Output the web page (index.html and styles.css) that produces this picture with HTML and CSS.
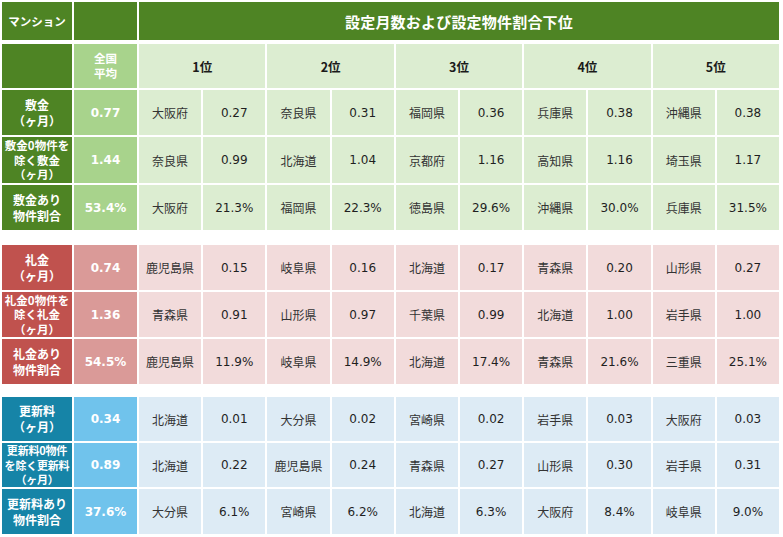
FILE: index.html
```html
<!DOCTYPE html>
<html lang="ja">
<head>
<meta charset="utf-8">
<link rel="stylesheet" href="styles.css">
</head>
<body>
<div class="page">
  <div class="grid head">
    <div class="cell dk-g hlabel">マンション</div>
    <div class="cell dk-g"></div>
    <div class="cell dk-g title">設定月数および設定物件割合下位</div>
    <div class="cell dk-g"></div>
    <div class="cell avg-g avglabel">全国<br>平均</div>
    <div class="cell lt-g rank">1位</div>
    <div class="cell lt-g rank">2位</div>
    <div class="cell lt-g rank">3位</div>
    <div class="cell lt-g rank">4位</div>
    <div class="cell lt-g rank">5位</div>
  </div>

  <div class="grid sec green">
    <div class="cell lab">敷金<br>（ヶ月）</div>
    <div class="cell avg">0.77</div>
    <div class="cell pref">大阪府</div><div class="cell num">0.27</div>
    <div class="cell pref">奈良県</div><div class="cell num">0.31</div>
    <div class="cell pref">福岡県</div><div class="cell num">0.36</div>
    <div class="cell pref">兵庫県</div><div class="cell num">0.38</div>
    <div class="cell pref">沖縄県</div><div class="cell num">0.38</div>

    <div class="cell lab three">敷金0物件を<br>除く敷金<br>（ヶ月）</div>
    <div class="cell avg">1.44</div>
    <div class="cell pref">奈良県</div><div class="cell num">0.99</div>
    <div class="cell pref">北海道</div><div class="cell num">1.04</div>
    <div class="cell pref">京都府</div><div class="cell num">1.16</div>
    <div class="cell pref">高知県</div><div class="cell num">1.16</div>
    <div class="cell pref">埼玉県</div><div class="cell num">1.17</div>

    <div class="cell lab">敷金あり<br>物件割合</div>
    <div class="cell avg">53.4%</div>
    <div class="cell pref">大阪府</div><div class="cell num">21.3%</div>
    <div class="cell pref">福岡県</div><div class="cell num">22.3%</div>
    <div class="cell pref">徳島県</div><div class="cell num">29.6%</div>
    <div class="cell pref">沖縄県</div><div class="cell num">30.0%</div>
    <div class="cell pref">兵庫県</div><div class="cell num">31.5%</div>
  </div>

  <div class="grid sec red">
    <div class="cell lab">礼金<br>（ヶ月）</div>
    <div class="cell avg">0.74</div>
    <div class="cell pref">鹿児島県</div><div class="cell num">0.15</div>
    <div class="cell pref">岐阜県</div><div class="cell num">0.16</div>
    <div class="cell pref">北海道</div><div class="cell num">0.17</div>
    <div class="cell pref">青森県</div><div class="cell num">0.20</div>
    <div class="cell pref">山形県</div><div class="cell num">0.27</div>

    <div class="cell lab three">礼金0物件を<br>除く礼金<br>（ヶ月）</div>
    <div class="cell avg">1.36</div>
    <div class="cell pref">青森県</div><div class="cell num">0.91</div>
    <div class="cell pref">山形県</div><div class="cell num">0.97</div>
    <div class="cell pref">千葉県</div><div class="cell num">0.99</div>
    <div class="cell pref">北海道</div><div class="cell num">1.00</div>
    <div class="cell pref">岩手県</div><div class="cell num">1.00</div>

    <div class="cell lab">礼金あり<br>物件割合</div>
    <div class="cell avg">54.5%</div>
    <div class="cell pref">鹿児島県</div><div class="cell num">11.9%</div>
    <div class="cell pref">岐阜県</div><div class="cell num">14.9%</div>
    <div class="cell pref">北海道</div><div class="cell num">17.4%</div>
    <div class="cell pref">青森県</div><div class="cell num">21.6%</div>
    <div class="cell pref">三重県</div><div class="cell num">25.1%</div>
  </div>

  <div class="grid sec blue">
    <div class="cell lab">更新料<br>（ヶ月）</div>
    <div class="cell avg">0.34</div>
    <div class="cell pref">北海道</div><div class="cell num">0.01</div>
    <div class="cell pref">大分県</div><div class="cell num">0.02</div>
    <div class="cell pref">宮崎県</div><div class="cell num">0.02</div>
    <div class="cell pref">岩手県</div><div class="cell num">0.03</div>
    <div class="cell pref">大阪府</div><div class="cell num">0.03</div>

    <div class="cell lab three tight">更新料0物件<br>を除く更新料<br>（ヶ月）</div>
    <div class="cell avg">0.89</div>
    <div class="cell pref">北海道</div><div class="cell num">0.22</div>
    <div class="cell pref">鹿児島県</div><div class="cell num">0.24</div>
    <div class="cell pref">青森県</div><div class="cell num">0.27</div>
    <div class="cell pref">山形県</div><div class="cell num">0.30</div>
    <div class="cell pref">岩手県</div><div class="cell num">0.31</div>

    <div class="cell lab">更新料あり<br>物件割合</div>
    <div class="cell avg">37.6%</div>
    <div class="cell pref">大分県</div><div class="cell num">6.1%</div>
    <div class="cell pref">宮崎県</div><div class="cell num">6.2%</div>
    <div class="cell pref">北海道</div><div class="cell num">6.3%</div>
    <div class="cell pref">大阪府</div><div class="cell num">8.4%</div>
    <div class="cell pref">岐阜県</div><div class="cell num">9.0%</div>
  </div>
</div>
</body>
</html>
```

FILE: styles.css
```css
html, body {
  margin: 0;
  padding: 0;
  background: #ffffff;
  overflow: hidden;
}

body {
  font-family: "Noto Sans CJK JP", "Noto Sans", sans-serif;
  width: 783px;
  height: 537px;
}

.page {
  padding: 2px 4px 0 2px;
}

.grid {
  display: grid;
  grid-template-columns: 70px 63px repeat(10, 1fr);
  column-gap: 2px;
  row-gap: 2px;
}

.head {
  grid-template-rows: 38px 44px;
  row-gap: 4px;
}

.cell {
  display: flex;
  align-items: center;
  justify-content: center;
  text-align: center;
  white-space: nowrap;
  overflow: hidden;
}

.dk-g { background: #4e8424; color: #ffffff; }
.avg-g { background: #a8d38c; color: #ffffff; }
.lt-g { background: #dcedd1; color: #1a1a1a; }

.hlabel {
  font-size: 11.5px;
  font-weight: 700;
}

.title {
  grid-column: 3 / 13;
  font-size: 15px;
  font-weight: 700;
  letter-spacing: 0.2px;
}

.avglabel {
  font-size: 11.5px;
  font-weight: 700;
  line-height: 15px;
}

.rank {
  grid-column: span 2;
  font-size: 12.5px;
  font-weight: 700;
}

.sec {
  margin-top: 2px;
}

.green { grid-template-rows: 45px 46px 45px; }
.red { grid-template-rows: 45px 45px 45px; margin-top: 15px; }
.blue { grid-template-rows: 44px 44px 45px; margin-top: 13px; }

.lab {
  font-size: 12px;
  font-weight: 700;
  line-height: 16px;
  color: #ffffff;
}

.lab.three {
  font-size: 11.5px;
  line-height: 14.5px;
}

.lab.tight {
  font-size: 11px;
  letter-spacing: -0.2px;
}

.avg {
  font-family: "DejaVu Sans", "Noto Sans CJK JP", sans-serif;
  font-size: 12px;
  font-weight: 700;
  color: #ffffff;
}

.pref {
  font-size: 12px;
  color: #333333;
}

.num {
  font-family: "DejaVu Sans", "Noto Sans CJK JP", sans-serif;
  font-size: 12px;
  color: #1f1f1f;
}

.green .lab { background: #4e8424; }
.green .avg { background: #a8d38c; }
.green .pref, .green .num { background: #dcedd1; }

.red .lab { background: #c0524e; }
.red .avg { background: #da9a98; }
.red .pref, .red .num { background: #f2dbdb; }

.blue .lab { background: #1684a7; }
.blue .avg { background: #70c3ec; }
.blue .pref, .blue .num { background: #ddebf5; }
```
